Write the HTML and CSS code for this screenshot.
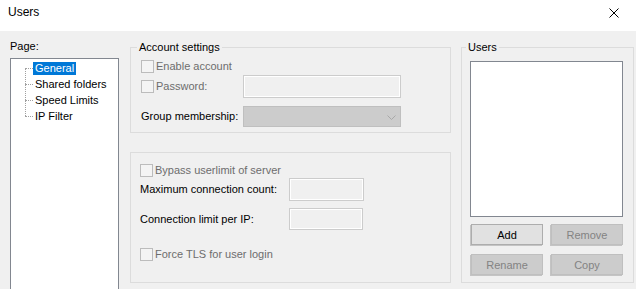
FILE: index.html
```html
<!DOCTYPE html>
<html lang="en">
<head>
  <meta charset="UTF-8" />
  <title>Users</title>
  <link rel="stylesheet" href="styles.css">
</head>
<body>
  <div class="titlebar">
    <span class="title">Users</span>
    <svg class="close" width="10" height="10" viewBox="0 0 10 10">
      <path d="M0.5 0.5 L9.5 9.5 M9.5 0.5 L0.5 9.5" stroke="#000" stroke-width="1" fill="none"/>
    </svg>
  </div>

  <div class="dialog">
    <div class="pages">
      <div class="page-label">Page:</div>
      <ul class="tree">
        <li><span class="selected">General</span></li>
        <li><span>Shared folders</span></li>
        <li><span>Speed Limits</span></li>
        <li class="last"><span>IP Filter</span></li>
      </ul>
    </div>

    <div class="settings">
      <fieldset class="group account">
        <legend>Account settings</legend>
        <div class="row row-first">
          <label class="check"><input type="checkbox" disabled> Enable account</label>
        </div>
        <div class="row row-pass">
          <label class="check col-a"><input type="checkbox" disabled> Password:</label>
          <input type="text" class="edit edit-pass" disabled>
        </div>
        <div class="row row-combo">
          <span class="col-a">Group membership:</span>
          <div class="combo">
            <svg width="9" height="5" viewBox="0 0 9 5">
              <polyline points="0.5,0.5 4.5,4.5 8.5,0.5" stroke="#a8a8a8" stroke-width="1" fill="none"/>
            </svg>
          </div>
        </div>
      </fieldset>

      <fieldset class="group limits">
        <div class="row row-first">
          <label class="check"><input type="checkbox" disabled> Bypass userlimit of server</label>
        </div>
        <div class="row row-max">
          <span class="col-b">Maximum connection count:</span>
          <input type="text" class="edit edit-max" disabled>
        </div>
        <div class="row row-ip">
          <span class="col-b">Connection limit per IP:</span>
          <input type="text" class="edit edit-ip" disabled>
        </div>
        <div class="row row-tls">
          <label class="check"><input type="checkbox" disabled> Force TLS for user login</label>
        </div>
      </fieldset>
    </div>

    <fieldset class="group users">
      <legend>Users</legend>
      <div class="listbox"></div>
      <div class="buttons">
        <button type="button" class="btn">Add</button>
        <button type="button" class="btn" disabled>Remove</button>
        <button type="button" class="btn" disabled>Rename</button>
        <button type="button" class="btn" disabled>Copy</button>
      </div>
    </fieldset>
  </div>
</body>
</html>
```

FILE: styles.css
```css
* {
  box-sizing: border-box;
}

body {
  margin: 0;
  height: 289px;
  overflow: hidden;
  background: #f0f0f0;
  font-family: "Liberation Sans", Arial, sans-serif;
  font-size: 11px;
  line-height: 13px;
  color: #000;
}

.titlebar {
  height: 31px;
  background: #fff;
  display: flex;
  justify-content: space-between;
  align-items: flex-start;
  padding: 5px 17px 0 8px;
}

.title {
  font-size: 12px;
  line-height: 15px;
}

.close {
  margin-top: 3px;
}

.dialog {
  display: flex;
  align-items: flex-start;
  padding: 10px 0 0 10px;
}

/* left page tree */
.pages {
  width: 109px;
  margin-top: -1px;
}

.page-label {
  height: 13px;
}

.tree {
  list-style: none;
  margin: 5px 0 0 0;
  padding: 1px 0 0 0;
  height: 240px;
  background: #fff;
  border: 1px solid #828790;
}

.tree li {
  position: relative;
  height: 16px;
  display: flex;
  align-items: center;
  padding-left: 22px;
}

.tree li::before {
  content: "";
  position: absolute;
  left: 14px;
  top: 8px;
  width: 8px;
  border-top: 1px dotted #a0a0a0;
}

.tree li::after {
  content: "";
  position: absolute;
  left: 14px;
  top: 8px;
  height: 16px;
  border-left: 1px dotted #a0a0a0;
}

.tree li.last::after {
  display: none;
}

.tree span {
  padding: 0 2px;
  height: 13px;
  white-space: nowrap;
}

.tree .selected {
  background: #0078d7;
  color: #fff;
}

/* group boxes */
.group {
  margin: 0;
  min-width: 0;
  border: 1px solid #dcdcdc;
}

.group legend {
  padding: 0 2px;
  margin-left: -4px;
  line-height: 13px;
}

.settings {
  width: 321px;
  margin-left: 11px;
}

.account {
  padding: 6px 9px 5px 10px;
}

.limits {
  margin-top: 19px;
  padding: 11px 9px 21px 9px;
}

.row {
  display: flex;
  align-items: center;
}

.row-first {
  height: 13px;
}

.row-pass {
  height: 23px;
  margin-top: 2px;
}

.row-combo {
  height: 21px;
  margin-top: 8px;
}

.row-max {
  height: 23px;
  margin-top: 1px;
}

.row-ip {
  height: 22px;
  margin-top: 7px;
}

.row-tls {
  height: 13px;
  margin-top: 18px;
}

.col-a {
  width: 102px;
  flex: none;
}

.col-b {
  width: 149px;
  flex: none;
}

.check {
  display: flex;
  align-items: center;
  gap: 2px;
  color: #6d6d6d;
  white-space: nowrap;
}

.check input {
  appearance: none;
  -webkit-appearance: none;
  margin: 0;
  width: 13px;
  height: 13px;
  border: 1px solid #bcbcbc;
  background: #f4f4f4;
}

.edit {
  margin: 0;
  padding: 0;
  height: 23px;
  border: 1px solid #cccccc;
  background: #f0f0f0;
  box-shadow: inset 0 0 0 1px #fff;
}

.edit-pass {
  width: 158px;
}

.edit-max {
  width: 75px;
}

.edit-ip {
  width: 74px;
  height: 22px;
}

.combo {
  width: 158px;
  height: 21px;
  border: 1px solid #bfbfbf;
  background: #cccccc;
  display: flex;
  align-items: center;
  justify-content: flex-end;
  padding: 1px 4px 0 0;
}

/* users box */
.users {
  width: 173px;
  margin-left: 10px;
  padding: 7px 10px 7px 8px;
}

.listbox {
  width: 153px;
  height: 156px;
  background: #fff;
  border: 1px solid #828790;
}

.buttons {
  display: grid;
  grid-template-columns: 72px 72px;
  grid-auto-rows: 21px;
  column-gap: 8px;
  row-gap: 9px;
  margin: 7px 0 0 1px;
}

.btn {
  margin: 0;
  padding: 0;
  font-family: inherit;
  font-size: 11px;
  color: #000;
  background: #e1e1e1;
  border: 1px solid #adadad;
  box-shadow: -1px 1px 0 #c4c4c4;
}

.btn:disabled {
  color: #838383;
  background: #cccccc;
  border-color: #bfbfbf;
}
```
